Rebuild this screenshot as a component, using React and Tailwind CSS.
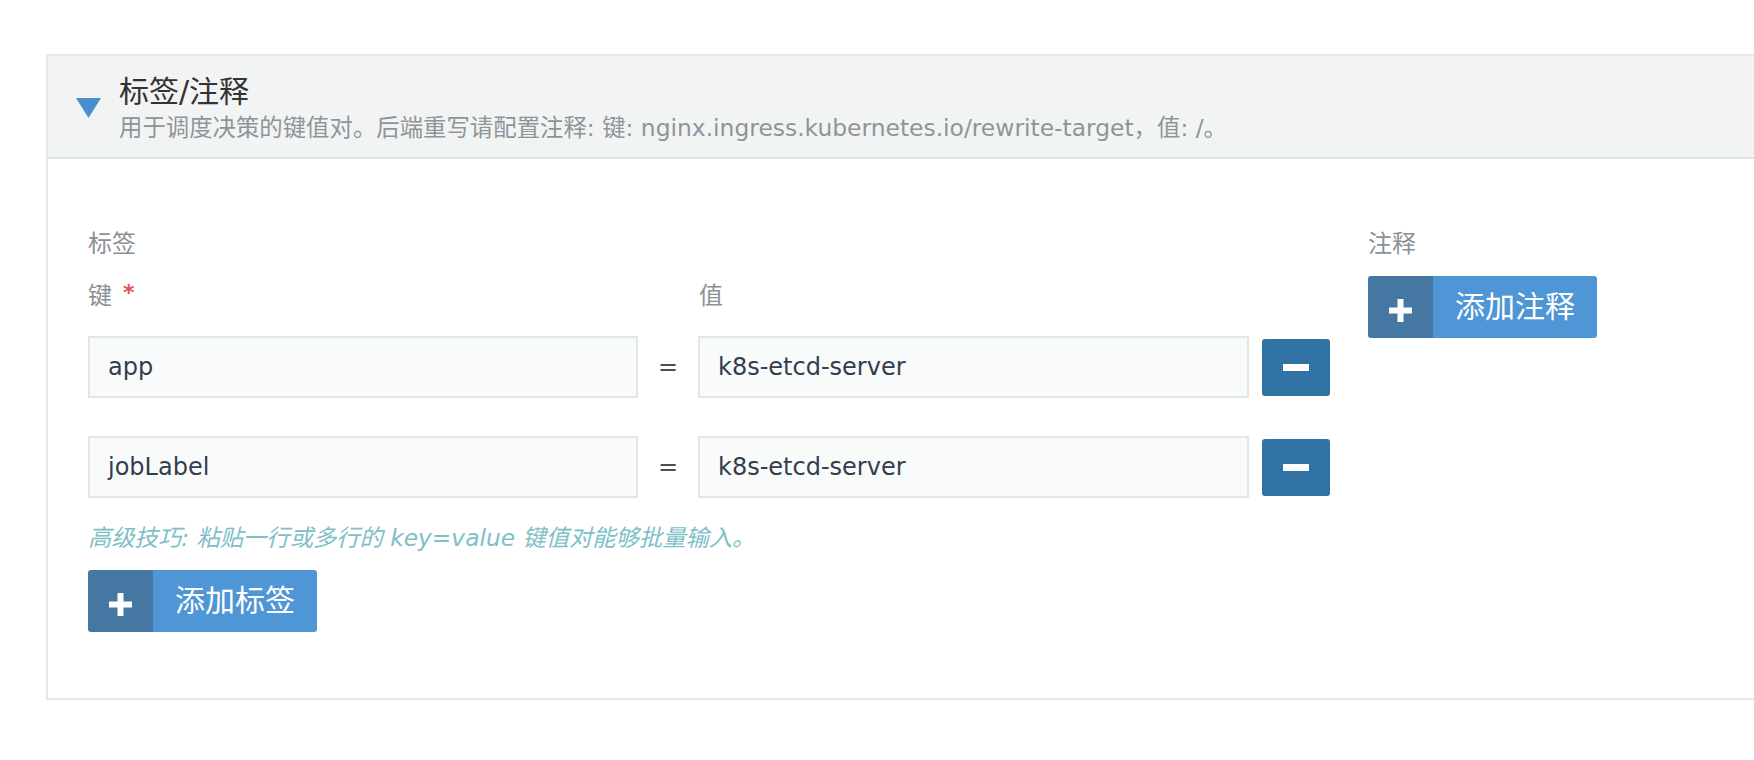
import React from 'react';

const font = 'font-["DejaVu_Sans","Noto_Sans_CJK_SC",sans-serif]';

function PlusIcon() {
    return (
        <svg width="23" height="23" viewBox="0 0 23 23" fill="#ffffff">
            <rect x="8.5" y="0" width="6" height="23" />
            <rect x="0" y="8.5" width="23" height="6" />
        </svg>
    );
}

function AddButton({ label }) {
    return (
        <button className="flex h-[62px] items-stretch rounded-[3px] overflow-hidden">
            <span className="w-[65px] bg-[#4577a3] flex items-center justify-center pt-[6px]">
                <PlusIcon />
            </span>
            <span className="bg-[#4f96d6] text-white text-[30px] leading-[62px] pl-[22px] pr-[22px]">{label}</span>
        </button>
    );
}

function Row({ k, v }) {
    return (
        <div className="flex items-center h-[62px]">
            <div className="w-[550px] h-[62px] border-2 border-[#e1e6e8] bg-[#f9fbfb] pl-[18px] flex items-center text-[24px] text-[#333d4d]">{k}</div>
            <div className="w-[60px] text-center text-[24px] text-[#4a4f55]">=</div>
            <div className="w-[551px] h-[62px] border-2 border-[#e1e6e8] bg-[#f9fbfb] pl-[18px] flex items-center text-[24px] text-[#333d4d]">{v}</div>
            <button className="ml-[13px] w-[68px] h-[57px] rounded-[3px] bg-[#3073a4] flex items-center justify-center">
                <span className="w-[26px] h-[7px] bg-white" />
            </button>
        </div>
    );
}

export default function App() {
    const rows = [
        { k: 'app', v: 'k8s-etcd-server' },
        { k: 'jobLabel', v: 'k8s-etcd-server' },
    ];

    return (
        <div className={`w-[1754px] h-[760px] overflow-hidden bg-white pt-[54px] ${font}`}>
            <div className="ml-[46px] w-[1800px] border-2 border-[#e4e8ea]">
                {/* header */}
                <div className="flex bg-[#f2f4f4] border-b-2 border-[#dde2e5] pl-[28px] pt-[18px] pb-[11px]">
                    <svg width="25" height="20" viewBox="0 0 25 20" className="mt-[24px]">
                        <polygon points="0,0 25,0 12.5,20" fill="#4a8ed0" />
                    </svg>
                    <div className="ml-[18px]">
                        <div className="text-[30px] leading-[36px] text-[#333333]">标签/注释</div>
                        <div className="text-[23.4px] leading-[36px] text-[#8e959a]">用于调度决策的键值对。后端重写请配置注释: 键: nginx.ingress.kubernetes.io/rewrite-target，值: /。</div>
                    </div>
                </div>

                {/* body */}
                <div className="flex pl-[40px] pt-[67px] pb-[66px]">
                    <div className="w-[1242px]">
                        <div className="text-[24px] leading-[36px] text-[#8a9196]">标签</div>
                        <div className="mt-[16px] flex text-[24px] leading-[36px] text-[#8a9196]">
                            <div className="w-[610px] flex items-start">
                                <span>键</span>
                                <span className="ml-[11px] text-[#e0534f] text-[22px] leading-[30px] font-bold">*</span>
                            </div>
                            <div className="pl-[1px]">值</div>
                        </div>
                        <div className="mt-[22px] flex flex-col gap-[38px]">
                            {rows.map((r, i) => (
                                <Row key={i} k={r.k} v={r.v} />
                            ))}
                        </div>
                        <div className="mt-[23px] text-[23.3px] leading-[34px] italic text-[#7dc0c8]">
                            高级技巧: 粘贴一行或多行的 key=value 键值对能够批量输入。
                        </div>
                        <div className="mt-[15px]">
                            <AddButton label="添加标签" />
                        </div>
                    </div>
                    <div className="ml-[38px]">
                        <div className="text-[24px] leading-[36px] text-[#8a9196]">注释</div>
                        <div className="mt-[14px]">
                            <AddButton label="添加注释" />
                        </div>
                    </div>
                </div>
            </div>
        </div>
    );
}
